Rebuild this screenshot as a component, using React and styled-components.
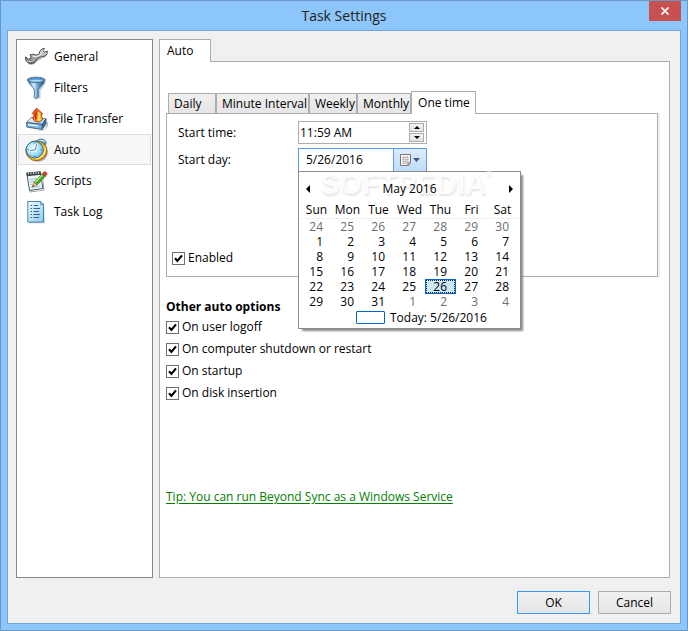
import React, { useState } from "react";
import styled, { createGlobalStyle, css } from "styled-components";

const DAY_NAMES = ["Sun", "Mon", "Tue", "Wed", "Thu", "Fri", "Sat"];

// six weeks, starting on Sunday the 24th of April 2016
const WEEKS = Array.from({ length: 6 }, (_, week) =>
    Array.from({ length: 7 }, (_, day) => {
        const date = new Date(2016, 3, 24 + week * 7 + day);
        return { day: date.getDate(), month: date.getMonth() };
    })
);

const SCHEDULES = ["Daily", "Minute Interval", "Weekly", "Monthly", "One time"];

const OPTIONS = [
    { id: "logoff", label: "On user logoff" },
    { id: "shutdown", label: "On computer shutdown or restart" },
    { id: "startup", label: "On startup" },
    { id: "disk", label: "On disk insertion" },
];

// icons
function WrenchIcon() {
    return (
        <svg width="24" height="24" viewBox="0 0 24 24" aria-hidden="true">
            <defs>
                <linearGradient id="steel" x1="0" y1="0" x2="0" y2="1">
                    <stop offset="0" stopColor="#f0f0f0" />
                    <stop offset="0.5" stopColor="#b4b4b4" />
                    <stop offset="1" stopColor="#6a6a6a" />
                </linearGradient>
            </defs>
            <path d="M4 19C7 21 10.500 20 12.500 16.500L18 13.500C21 13 23.500 11 24 8L20 11L12 15Z" fill="#000" opacity="0.25" />
            <path
                d="M1.600 11.800L4.600 14.200L7.200 13L6.200 9.800C8.800 8.800 11 9.200 12.200 10.300L15.300 8.800C15.200 6 17.300 3.500 20.500 3.300L19 5.700L20.300 7.200L23.400 6.200C23.500 9.300 21.500 11.600 17.600 11.600L12.900 14C12.300 17 9.600 19 6.300 18.500C3 18 0.900 15.200 1.600 11.800Z"
                fill="url(#steel)"
                stroke="#4c4c4c"
                strokeWidth="1"
                strokeLinejoin="round"
            />
            <path d="M9 11.300L12 11.800L18 8.700" fill="none" stroke="#fff" strokeWidth="1" opacity="0.85" />
            <path d="M3 15.500C5 17.200 8.500 17 10.500 14.500" fill="none" stroke="#e4e4e4" strokeWidth="1" />
        </svg>
    );
}

function FunnelIcon() {
    return (
        <svg width="24" height="24" viewBox="0 0 24 24" aria-hidden="true">
            <defs>
                <linearGradient id="funnel" x1="0" x2="1">
                    <stop offset="0" stopColor="#2b68a6" />
                    <stop offset="0.35" stopColor="#d5edff" />
                    <stop offset="0.6" stopColor="#5a9bd2" />
                    <stop offset="1" stopColor="#1c4b80" />
                </linearGradient>
            </defs>
            <path d="M6 8L11.500 15V23.500L16.500 22V14.500L22.500 6Z" fill="#000" opacity="0.22" />
            <path d="M3.500 3.800C4.500 8 8.500 10.500 10.300 13.500V21.500C10.300 22.800 14.200 22.300 14.200 20.500V13.500C16 10.500 20.200 8 21 3.800Z" fill="url(#funnel)" stroke="#315d88" strokeWidth="0.800" />
            <ellipse cx="12.200" cy="3.900" rx="8.800" ry="2.700" fill="#4f97d2" stroke="#5b6f84" strokeWidth="1" />
            <path d="M5.500 4.600C8 3.400 16 3.400 19 4.600C16 6.200 8 6.200 5.500 4.600Z" fill="#a9daff" />
        </svg>
    );
}

function TransferIcon() {
    return (
        <svg width="24" height="24" viewBox="0 0 24 24" aria-hidden="true">
            <defs>
                <linearGradient id="tray" x1="0" y1="0" x2="1" y2="1">
                    <stop offset="0" stopColor="#fff" />
                    <stop offset="1" stopColor="#8ec6eb" />
                </linearGradient>
                <linearGradient id="flame" x1="0" y1="0" x2="1" y2="1">
                    <stop offset="0" stopColor="#e82411" />
                    <stop offset="0.5" stopColor="#ff8b1f" />
                    <stop offset="1" stopColor="#ffe13b" />
                </linearGradient>
            </defs>
            <path d="M4 22L20 23.500L24 14V18L20 24Z" fill="#000" opacity="0.3" />
            <path d="M7 10.500L22 11.800L18.200 17.500L2.500 15.500Z" fill="url(#tray)" stroke="#5d7080" strokeWidth="0.900" />
            <path d="M2.500 15.500L18.200 17.500V22.500L2.800 20Z" fill="#78b7e0" stroke="#3b5a74" strokeWidth="0.900" />
            <path d="M18.200 17.500L22 11.800V16.800L18.200 22.500Z" fill="#2f6e9f" stroke="#3b5a74" strokeWidth="0.900" />
            <path d="M4 17.500L14 18.800" stroke="#e4f6ff" strokeWidth="1.300" />
            <path d="M12.500 1.200L18.800 6.800L17.200 7.300L18.500 12.500L15.300 15L11 14.300L8.800 11.500L10.400 7.500L8.200 6.500Z" fill="url(#flame)" stroke="#a73112" strokeWidth="0.900" />
            <path d="M13 4.500L11.500 8.500L12 12.500" fill="none" stroke="#d91a0c" strokeWidth="1.600" />
            <path d="M14 5L15.500 8L14.500 12.500L16.500 12.800" fill="none" stroke="#fff064" strokeWidth="1.500" />
        </svg>
    );
}

function ClockIcon() {
    return (
        <svg width="24" height="24" viewBox="0 0 24 24" aria-hidden="true">
            <defs>
                <radialGradient id="dial" cx="0.4" cy="0.4" r="0.7">
                    <stop offset="0" stopColor="#f2fcff" />
                    <stop offset="0.5" stopColor="#b0e2fb" />
                    <stop offset="1" stopColor="#56b2e8" />
                </radialGradient>
                <linearGradient id="gold" x1="0" y1="0" x2="1" y2="1">
                    <stop offset="0" stopColor="#8f5208" />
                    <stop offset="0.6" stopColor="#ffc71e" />
                    <stop offset="1" stopColor="#e08a00" />
                </linearGradient>
            </defs>
            <ellipse cx="14" cy="15" rx="9.800" ry="8.800" fill="#000" opacity="0.25" />
            <ellipse cx="17" cy="5" rx="5" ry="3.900" fill="#3c9edb" stroke="#286c99" strokeWidth="0.800" />
            <path d="M13.500 3.500C15.500 2 18.800 2 20.500 4" fill="none" stroke="#c5eeff" strokeWidth="1.500" />
            <ellipse cx="12.400" cy="12.700" rx="10.600" ry="9.900" fill="url(#gold)" stroke="#8a5510" strokeWidth="0.900" />
            <path d="M21.300 10C22 15 18 20 12 21" fill="none" stroke="#ffe98c" strokeWidth="1.200" />
            <ellipse cx="10.700" cy="11.700" rx="8.500" ry="8.200" fill="url(#dial)" stroke="#2773a3" strokeWidth="1" />
            <path d="M12.800 6L11.200 11.800L6 12.700" fill="none" stroke="#fff" strokeWidth="2.600" />
            <path d="M12.800 6L11.200 11.800L6 12.700" fill="none" stroke="#4b7f9d" strokeWidth="1" />
            <path d="M10.700 4.500V5.600M10.700 17.800V19M3.400 11.700H4.600M16.800 11.700H18" stroke="#39718f" strokeWidth="1" />
        </svg>
    );
}

function ScriptIcon() {
    return (
        <svg width="24" height="24" viewBox="0 0 24 24" aria-hidden="true">
            <path d="M5 22.500L19 21L19 8L20.500 21.500L6 23.500Z" fill="#000" opacity="0.35" />
            <path d="M2.800 4.500L16.500 3.200L18.800 19.500L5.500 21.500Z" fill="#e9f4fa" stroke="#4f5b63" strokeWidth="1" />
            <path d="M2.500 3.500L16.500 2.300L17 5.800L3 7.200Z" fill="#39434a" />
            <path d="M4.500 3.500V5.500M7 3.300V5.300M9.500 3.100V5.100M12 3V5M14.500 2.800V4.800" stroke="#e8eef2" strokeWidth="0.900" />
            <path d="M5.500 10.500L13 9.600M6 13L11 12.400M6.500 15.500L9.500 15.100M7 18.500L16 17.200" stroke="#a8bbc6" strokeWidth="1" />
            <path d="M18.300 4.800L21.300 7.300L13 16L10.200 13.300Z" fill="#50ad2b" stroke="#2c6c18" strokeWidth="0.800" />
            <path d="M18.200 6L11.500 13" stroke="#b2ee80" strokeWidth="1.100" />
            <path d="M18.300 4.800L20 3C21.500 2.300 23.200 3.700 22.800 5.500L21.300 7.300Z" fill="#e34426" stroke="#982818" strokeWidth="0.700" />
            <path d="M10.200 13.300L13 16L8.500 17.800Z" fill="#f2cb83" stroke="#865c22" strokeWidth="0.600" />
            <path d="M8.200 18L10 17.200L9 16.200Z" fill="#222" />
        </svg>
    );
}

function LogIcon() {
    return (
        <svg width="24" height="24" viewBox="0 0 24 24" aria-hidden="true">
            <defs>
                <linearGradient id="paper" x1="0" y1="0" x2="1" y2="1">
                    <stop offset="0" stopColor="#f5fcff" />
                    <stop offset="1" stopColor="#8bcaf0" />
                </linearGradient>
            </defs>
            <path d="M5 3H20L20.800 23.300H5Z" fill="#000" opacity="0.25" />
            <path d="M3.800 1.500H16.500L19.500 4.500V22H3.800Z" fill="url(#paper)" stroke="#4485b0" strokeWidth="1" />
            <path d="M16.500 1.500V4.500H19.500Z" fill="#c7eaff" stroke="#4485b0" strokeWidth="0.800" />
            <path d="M6.500 5.500H8M9.500 5.500H14M6.500 8.500H8M9.500 8.500H16M6.500 11.500H8M9.500 11.500H15M6.500 14.500H8M9.500 14.500H16M6.500 17.500H8M9.500 17.500H15" stroke="#3c637f" strokeWidth="1.100" />
        </svg>
    );
}

function CalendarIcon() {
    return (
        <svg width="22" height="14" viewBox="0 0 22 14" aria-hidden="true">
            <path d="M1.500 1.500H11.500V9.500L9.500 12.500H1.500Z" fill="#f8f8f8" stroke="#7d746e" />
            <path d="M3 4.500H10M3 6.500H10M3 8.500H10M3 10.500H8M4.500 3V11M6.500 3V11M8.500 3V10" stroke="#b5b5b5" strokeWidth="0.800" />
            <path d="M9 12.500V10H11.500" fill="none" stroke="#7d746e" />
            <path d="M14 5H21L17.500 9Z" fill="#40587c" />
        </svg>
    );
}

function CloseIcon() {
    return (
        <svg width="10" height="8" viewBox="0 0 10 8" aria-hidden="true">
            <path d="M1.500 0.500L8.500 7.500M8.500 0.500L1.500 7.500" stroke="#fff" strokeWidth="1.700" />
        </svg>
    );
}

const SECTIONS = [
    { name: "General", Icon: WrenchIcon },
    { name: "Filters", Icon: FunnelIcon },
    { name: "File Transfer", Icon: TransferIcon },
    { name: "Auto", Icon: ClockIcon },
    { name: "Scripts", Icon: ScriptIcon },
    { name: "Task Log", Icon: LogIcon },
];

function Check({ id, children }) {
    const [checked, setChecked] = useState(true);

    return (
        <CheckLabel htmlFor={id}>
            <CheckBox>
                <input id={id} type="checkbox" checked={checked} onChange={(e) => setChecked(e.target.checked)} />
                {checked && (
                    <svg width="13" height="13" viewBox="0 0 13 13" aria-hidden="true">
                        <path d="M3 6.300L5.400 9L10 3.300" fill="none" stroke="#000" strokeWidth="2.100" />
                    </svg>
                )}
            </CheckBox>
            {children}
        </CheckLabel>
    );
}

function Calendar({ selected, onSelect }) {
    return (
        <CalendarPopup>
            <Watermark aria-hidden="true">SOFTPEDIA<sup>®</sup></Watermark>
            <CalendarHeader>
                <ArrowButton aria-label="Previous month">
                    <svg width="4" height="8" viewBox="0 0 4 8"><path d="M4 0V8L0 4Z" /></svg>
                </ArrowButton>
                <span>May 2016</span>
                <ArrowButton aria-label="Next month">
                    <svg width="4" height="8" viewBox="0 0 4 8"><path d="M0 0V8L4 4Z" /></svg>
                </ArrowButton>
            </CalendarHeader>
            <DayTable>
                <thead>
                    <tr>{DAY_NAMES.map((name) => <th key={name}>{name}</th>)}</tr>
                </thead>
                <tbody>
                    {WEEKS.map((week, i) => (
                        <tr key={i}>
                            {week.map(({ day, month }) => (
                                <td key={day}>
                                    <DayButton
                                        $outside={month !== 4}
                                        $selected={month === 4 && day === selected}
                                        onClick={() => month === 4 && onSelect(day)}
                                    >
                                        {day}
                                    </DayButton>
                                </td>
                            ))}
                        </tr>
                    ))}
                </tbody>
            </DayTable>
            <TodayButton onClick={() => onSelect(26)}>
                <TodayMark />
                Today: 5/26/2016
            </TodayButton>
        </CalendarPopup>
    );
}

function App() {
    const [section, setSection] = useState("Auto");
    const [schedule, setSchedule] = useState("One time");
    const [open, setOpen] = useState(true);
    const [day, setDay] = useState(26);

    return (
        <Window>
            <GlobalStyle />
            <TitleBar>
                <h1>Task Settings</h1>
                <CloseButton aria-label="Close"><CloseIcon /></CloseButton>
            </TitleBar>
            <Client>
                <Main>
                    <Sidebar>
                        {SECTIONS.map(({ name, Icon }) => (
                            <SidebarItem key={name} $active={name === section} onClick={() => setSection(name)}>
                                <Icon />
                                {name}
                            </SidebarItem>
                        ))}
                    </Sidebar>
                    <TabArea>
                        <PageTab>{section}</PageTab>
                        <Page>
                            <TabList role="tablist">
                                {SCHEDULES.map((name) => (
                                    <Tab
                                        key={name}
                                        role="tab"
                                        aria-selected={name === schedule}
                                        $active={name === schedule}
                                        onClick={() => setSchedule(name)}
                                    >
                                        {name}
                                    </Tab>
                                ))}
                            </TabList>
                            <SchedulePanel>
                                <Fields>
                                    <label htmlFor="time">Start time:</label>
                                    <TimeField>
                                        <FieldInput id="time" defaultValue="11:59 AM" />
                                        <Spinner>
                                            <SpinButton aria-label="Later">
                                                <svg width="6" height="3" viewBox="0 0 6 3"><path d="M0 3H6L3 0Z" /></svg>
                                            </SpinButton>
                                            <SpinButton aria-label="Earlier">
                                                <svg width="6" height="3" viewBox="0 0 6 3"><path d="M0 0H6L3 3Z" /></svg>
                                            </SpinButton>
                                        </Spinner>
                                    </TimeField>
                                    <label htmlFor="day">Start day:</label>
                                    <DateField>
                                        <FieldInput id="day" $indent value={`5/${day}/2016`} readOnly />
                                        <DropButton aria-label="Open calendar" onClick={() => setOpen(!open)}>
                                            <CalendarIcon />
                                        </DropButton>
                                        {open && <Calendar selected={day} onSelect={setDay} />}
                                    </DateField>
                                </Fields>
                                <Check id="enabled">Enabled</Check>
                            </SchedulePanel>
                            <OptionsTitle>Other auto options</OptionsTitle>
                            <OptionList>
                                {OPTIONS.map(({ id, label }) => <Check key={id} id={id}>{label}</Check>)}
                            </OptionList>
                            <TipLink href="#service">Tip: You can run Beyond Sync as a Windows Service</TipLink>
                        </Page>
                    </TabArea>
                </Main>
                <Footer>
                    <DialogButton $primary>OK</DialogButton>
                    <DialogButton>Cancel</DialogButton>
                </Footer>
            </Client>
        </Window>
    );
}

const GlobalStyle = createGlobalStyle`
  * {
    box-sizing: border-box;
  }
  body {
    margin: 0;
    color: #000;
    font: 12px/16px "Open Sans", "Noto Sans", sans-serif;
  }
  button, input {
    margin: 0;
    padding: 0;
    border: none;
    background: none;
    color: inherit;
    font: inherit;
  }
`;

// window
const Window = styled.div`
  display: flex;
  flex-direction: column;
  min-height: 100vh;
  padding: 0 6px 6px;
  border: 1px solid #6a97c4;
  background: #8cc6fa;
`;

const TitleBar = styled.header`
  display: grid;
  grid-template-columns: 32px 1fr 32px;
  height: 29px;
  h1 {
    grid-column: 2;
    margin: 0;
    font-size: 14px;
    font-weight: 400;
    line-height: 29px;
    text-align: center;
    color: #222;
  }
`;

const CloseButton = styled.button`
  display: grid;
  place-items: center;
  height: 20px;
  background: #c75050;
`;

const Client = styled.div`
  flex: 1;
  display: flex;
  flex-direction: column;
  padding: 8px 9px 9px 8px;
  border: 1px solid #73a6d6;
  background: #f0f0f0;
`;

const Main = styled.main`
  flex: 1;
  display: grid;
  grid-template-columns: 137px 1fr;
  gap: 6px;
  padding-right: 1px;
`;

const Sidebar = styled.nav`
  padding: 1px;
  border: 1px solid #828790;
  background: #fff;
`;

const SidebarItem = styled.button`
  display: flex;
  align-items: center;
  gap: 6px;
  width: 100%;
  height: 31px;
  padding-left: 5px;
  border: 1px solid ${(props) => (props.$active ? "#dedede" : "transparent")};
  background: ${(props) => (props.$active ? "#f7f7f7" : "none")};
`;

// tabs
const TabArea = styled.section`
  display: flex;
  flex-direction: column;
  align-items: flex-start;
`;

const tabEdge = css`
  border: 1px solid #acacac;
  border-bottom: none;
`;

const PageTab = styled.button`
  ${tabEdge}
  z-index: 1;
  width: 52px;
  height: 23px;
  margin-bottom: -1px;
  padding-left: 7px;
  text-align: left;
  background: #fff;
`;

const Page = styled.div`
  flex: 1;
  width: 100%;
  padding: 29px 11px 0 6px;
  border: 1px solid #acacac;
  background: #fff;
`;

const TabList = styled.div`
  display: flex;
  align-items: flex-end;
  height: 23px;
  margin-bottom: -1px;
  padding-left: 2px;
`;

const Tab = styled.button`
  ${tabEdge}
  min-width: 48px;
  height: 20px;
  margin-bottom: 1px;
  padding: 0 1px 0 5px;
  text-align: left;
  background: linear-gradient(#f0f0f0, #e5e5e5);
  ${(props) =>
      props.$active &&
      css`
        z-index: 1;
        height: 23px;
        margin-bottom: 0;
        padding: 0 5px 0 6px;
        background: #fff;
      `}
`;

const SchedulePanel = styled.div`
  padding: 7px 5px 10px;
  border: 1px solid #acacac;
  box-shadow: 2px 0 0 #f0f0f0;
`;

// fields
const Fields = styled.div`
  display: grid;
  grid-template-columns: 120px 129px;
  row-gap: 4px;
  align-items: center;
  margin-bottom: 78px;
  padding-left: 6px;
`;

const TimeField = styled.div`
  display: flex;
  height: 23px;
  border: 1px solid #abadb3;
`;

const DateField = styled.div`
  position: relative;
  display: flex;
  height: 24px;
  border: 1px solid #569de5;
`;

const FieldInput = styled.input`
  flex: 1;
  min-width: 0;
  padding-left: ${(props) => (props.$indent ? 7 : 1)}px;
  outline: none;
`;

const Spinner = styled.div`
  display: grid;
  gap: 1px;
  width: 17px;
  padding: 1px 2px 1px 0;
`;

const SpinButton = styled.button`
  display: grid;
  place-items: center;
  border: 1px solid #acacac;
  background: linear-gradient(#f3f3f3, #e4e4e4);
`;

const DropButton = styled.button`
  display: grid;
  place-items: center;
  width: 33px;
  border-left: 1px solid #569de5;
  background: linear-gradient(#dcecfc, #bfdcfa);
`;

const CheckLabel = styled.label`
  display: flex;
  align-items: center;
  gap: 3px;
  width: fit-content;
`;

const CheckBox = styled.span`
  display: grid;
  input, svg {
    grid-area: 1 / 1;
  }
  input {
    appearance: none;
    width: 13px;
    height: 13px;
    border: 1px solid #707070;
    background: #fff;
  }
  svg {
    pointer-events: none;
  }
`;

// calendar
const CalendarPopup = styled.div`
  position: absolute;
  z-index: 2;
  top: 22px;
  left: -1px;
  width: 223px;
  padding: 9px 2px 2px;
  border: 1px solid #8c8c8c;
  background: #fff;
  box-shadow: 3px 3px 2px -1px #8a8a8a;
`;

const Watermark = styled.span`
  position: absolute;
  top: -2px;
  left: 21px;
  font: bold 29px/28px "Liberation Sans", sans-serif;
  color: #fcfcfc;
  text-shadow: 1px 2px 2px #e6e6e6;
  pointer-events: none;
  sup {
    font-size: 8px;
    line-height: 8px;
    vertical-align: top;
  }
`;

const CalendarHeader = styled.div`
  position: relative;
  display: flex;
  justify-content: space-between;
  padding: 0 5px;
`;

const ArrowButton = styled.button`
  display: grid;
  place-items: center;
`;

const DayTable = styled.table`
  width: 100%;
  margin-top: 6px;
  border-collapse: collapse;
  table-layout: fixed;
  th {
    height: 15px;
    padding: 0;
    border-bottom: 1px solid #f0f0f0;
    font-weight: 400;
    line-height: 14px;
    text-align: center;
  }
  td {
    padding: 0;
  }
`;

const DayButton = styled.button`
  display: block;
  width: 100%;
  height: 15px;
  padding-right: 9px;
  line-height: 15px;
  text-align: right;
  color: ${(props) => (props.$outside ? "#6d6d6d" : "#000")};
  ${(props) =>
      props.$selected &&
      css`
        padding-right: 8px;
        border: 1px solid #0066cc;
        outline: 1px dotted #222;
        outline-offset: -2px;
        line-height: 13px;
        background: #cce8f6;
      `}
`;

const TodayButton = styled.button`
  display: flex;
  align-items: center;
  gap: 5px;
  margin: 1px 0 0 55px;
`;

const TodayMark = styled.span`
  width: 29px;
  height: 13px;
  border: 1px solid #0066cc;
  border-radius: 1px;
`;

// bottom half
const OptionsTitle = styled.h2`
  margin: 22px 0 4px;
  font-size: 12px;
  font-weight: 700;
  line-height: 16px;
`;

const OptionList = styled.div`
  display: grid;
  gap: 6px;
`;

const TipLink = styled.a`
  display: inline-block;
  margin-top: 88px;
  color: #008000;
  text-underline-offset: 2px;
`;

const Footer = styled.footer`
  display: flex;
  justify-content: flex-end;
  gap: 8px;
  padding-top: 13px;
`;

const DialogButton = styled.button`
  width: 73px;
  height: 23px;
  border: 1px solid ${(props) => (props.$primary ? "#3399ff" : "#acacac")};
  background: linear-gradient(#f0f0f0, #e5e5e5);
`;

export default App;
